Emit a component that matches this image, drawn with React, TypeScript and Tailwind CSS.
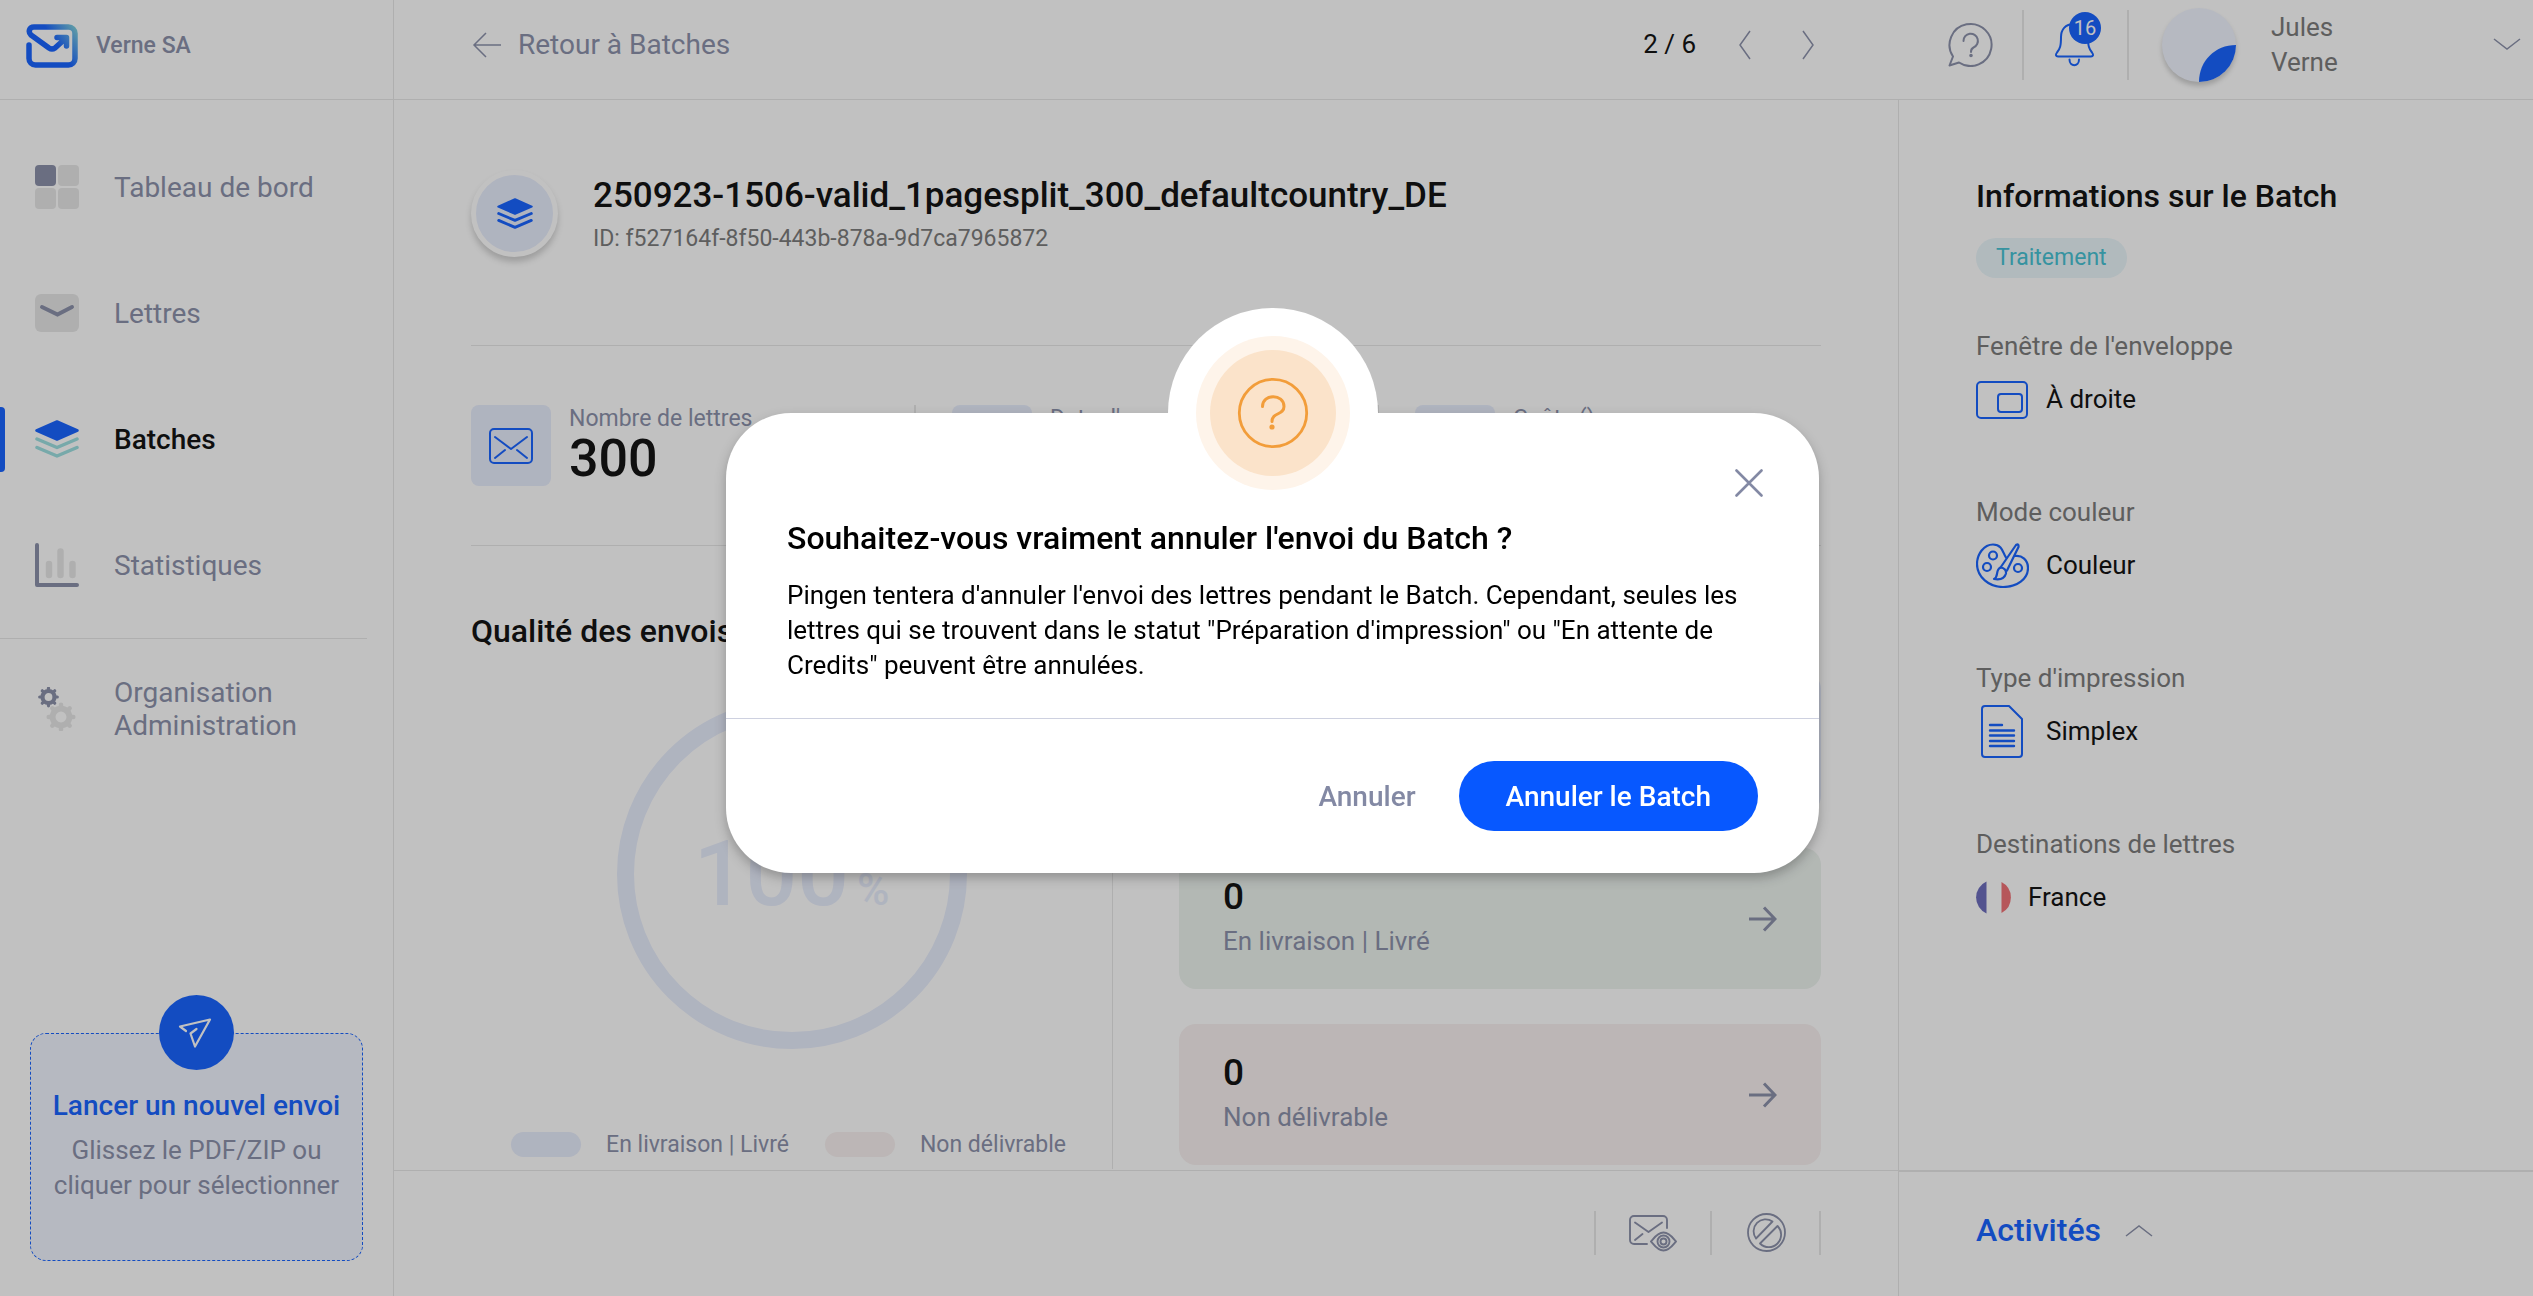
import type { ReactNode } from "react"

type NavItem = { label: string; icon: ReactNode; active?: boolean }
type InfoItem = { label: string; value: string; icon: ReactNode; iconWidth: string }

export default function App() {
  return (
    <div className="flex min-h-screen bg-white font-[Roboto,'Noto_Sans',sans-serif] text-[26px] leading-[35px] text-black">
      <Sidebar />
      <div className="flex min-w-0 flex-1 flex-col">
        <TopBar />
        <div className="flex flex-1">
          <BatchDetail />
          <BatchInfo />
        </div>
      </div>
      <CancelDialog />
    </div>
  )
}

const NAV: NavItem[] = [
  { label: "Tableau de bord", icon: <DashboardIcon /> },
  { label: "Lettres", icon: <LetterIcon /> },
  { label: "Batches", icon: <StackIcon tone="#95ddde" />, active: true },
  { label: "Statistiques", icon: <ChartIcon /> },
]

function Sidebar() {
  return (
    <aside className="flex w-[394px] shrink-0 flex-col border-r border-[#e6e6e6]">
      <a href="#" className="flex h-[100px] items-center gap-[18px] border-b border-[#e6e6e6] pb-2 pl-[26px] text-[23px] font-medium text-[#8389a4]">
        <LogoMark />
        Verne SA
      </a>
      <nav>
        <ul className="mt-6">
          {NAV.map((item) => (
            <NavLink key={item.label} {...item} />
          ))}
        </ul>
        <hr className="mr-[26px] mt-[10px] border-[#e6e6e6]" />
        <a href="#" className="mt-[37px] flex items-center gap-[35px] pl-[35px] text-[28px] leading-[33px] text-[#8389a4]">
          <GearsIcon />
          <span>
            Organisation
            <br />
            Administration
          </span>
        </a>
      </nav>
      <button
        type="button"
        className="mx-[30px] mb-[35px] mt-auto flex h-[228px] flex-col items-center rounded-2xl border border-dashed border-[#0758ff] bg-[#f0f4ff]"
      >
        <span className="-mt-[39px] flex size-[75px] shrink-0 items-center justify-center rounded-full bg-[#0758ff]">
          <PlaneIcon />
        </span>
        <span className="mt-[18px] whitespace-nowrap text-[28px] font-medium text-[#0758ff]">Lancer un nouvel envoi</span>
        <span className="mt-2.5 whitespace-nowrap text-[#8389a4]">
          Glissez le PDF/ZIP ou
          <br />
          cliquer pour sélectionner
        </span>
      </button>
    </aside>
  )
}

function NavLink({ label, icon, active }: NavItem) {
  return (
    <li className="flex h-[126px] items-center">
      <span className={active ? "h-[65px] w-[5px] rounded-r bg-[#0758ff]" : "w-[5px]"} />
      <a
        href="#"
        className={`flex items-center gap-[35px] pl-[30px] text-[28px] ${active ? "font-medium" : "text-[#8389a4]"}`}
      >
        {icon}
        {label}
      </a>
    </li>
  )
}

function TopBar() {
  return (
    <header className="flex h-[100px] shrink-0 items-center border-b border-[#e6e6e6] pb-2.5 text-[#8389a4]">
      <div className="flex flex-1 items-center pl-[78px] pr-[83px]">
        <a href="#" className="flex items-center gap-4 text-[28px]">
          <svg width="30" height="26" viewBox="0 0 30 26" fill="none" stroke="currentColor" strokeWidth="1.5">
            <path d="M29 13H2M14 1L2 13l12 12" />
          </svg>
          Retour à Batches
        </a>
        <span className="ml-auto mr-[42px] text-black">2 / 6</span>
        <button type="button" aria-label="Précédent" className="mr-[49px]">
          <svg width="14" height="30" viewBox="0 0 14 30" fill="none" stroke="currentColor" strokeWidth="1.5">
            <path d="M12 1L2 15l10 14" />
          </svg>
        </button>
        <button type="button" aria-label="Suivant">
          <svg width="14" height="30" viewBox="0 0 14 30" fill="none" stroke="currentColor" strokeWidth="1.5">
            <path d="M2 1l10 14L2 29" />
          </svg>
        </button>
      </div>
      <div className="flex w-[635px] items-center pl-[50px] pr-3">
        <button type="button" aria-label="Aide">
          <HelpIcon />
        </button>
        <span className="ml-[29px] h-[70px] w-0.5 bg-[#e6e6e6]" />
        <button type="button" aria-label="Notifications" className="relative ml-[30px] text-[#0758ff]">
          <BellIcon />
          <span className="absolute -top-[10px] left-[15px] flex size-8 items-center justify-center rounded-full bg-[#0758ff] text-[20px] leading-8 text-white">
            16
          </span>
        </button>
        <span className="ml-[31px] h-[70px] w-0.5 bg-[#e6e6e6]" />
        <button type="button" className="ml-[33px] flex flex-1 items-center text-left text-[#727272]">
          <span className="size-[74px] shrink-0 overflow-hidden rounded-full bg-[#f0f4ff] shadow-[0_4px_5px_rgba(0,0,0,0.2)]">
            <svg width="74" height="74" viewBox="0 0 74 74">
              <path d="M37 74C37 53 53 37 74 37V74Z" fill="#0758ff" />
            </svg>
          </span>
          <span className="ml-[35px]">
            Jules
            <br />
            Verne
          </span>
          <svg className="ml-auto text-[#8389a4]" width="28" height="13" viewBox="0 0 28 13" fill="none" stroke="currentColor" strokeWidth="1.5">
            <path d="M1 1l13 10L27 1" />
          </svg>
        </button>
      </div>
    </header>
  )
}

function BatchDetail() {
  return (
    <main className="flex min-w-0 flex-1 flex-col">
      <div className="flex-1 px-[77px]">
        <div className="flex pt-[70px]">
          <span className="flex size-[87px] items-center justify-center rounded-full border-[5px] border-white bg-[#e6ecfd] shadow-[0_5px_6px_rgba(0,0,0,0.2)]">
            <StackIcon tone="#0758ff" small />
          </span>
          <div className="ml-[35px] pt-1.5">
            <h1 className="text-[35px] font-medium leading-10">250923-1506-valid_1pagesplit_300_defaultcountry_DE</h1>
            <p className="mt-[5px] text-[23px] text-[#727272]">ID: f527164f-8f50-443b-878a-9d7ca7965872</p>
          </div>
        </div>
        <section className="mt-[88px] grid grid-cols-[445fr_463fr_442fr] border-y border-[#e6e6e6] py-[59px]">
          <Stat label="Nombre de lettres" value="300" />
          <Stat label="Date d'envoi" value="–" />
          <Stat label="Coûts ()" value="–" />
        </section>
        <div className="grid grid-cols-2 gap-[66px]">
          <Quality />
          <section className="flex flex-col gap-[35px] pt-[126px]">
            <StatusCard count={300} label="Traitement" tone="bg-[#e6ecfd]" />
            <StatusCard count={0} label="En livraison | Livré" tone="bg-[#ebf2ed]" />
            <StatusCard count={0} label="Non délivrable" tone="bg-[#f8f0ef]" />
          </section>
        </div>
      </div>
      <footer className="flex h-[126px] shrink-0 items-center justify-end border-t border-[#e6e6e6] pb-0.5 pr-[77px] text-[#8389a4]">
        <span className="h-11 w-0.5 bg-[#e6e6e6]" />
        <button type="button" aria-label="Aperçu" className="mx-[33px]">
          <MailEyeIcon />
        </button>
        <span className="h-11 w-0.5 bg-[#e6e6e6]" />
        <button type="button" aria-label="Annuler le Batch" className="ml-[35px] mr-[33px]">
          <BanIcon />
        </button>
        <span className="h-11 w-0.5 bg-[#e6e6e6]" />
      </footer>
    </main>
  )
}

function Stat({ label, value }: { label: string; value: string }) {
  return (
    <div className="flex gap-[18px] border-r-2 border-[#e6e6e6] pl-9 first:pl-0 last:border-r-0">
      <span className="flex h-[81px] w-20 items-center justify-center rounded-lg bg-[#e6ecfd]">
        <EnvelopeIcon />
      </span>
      <div>
        <p className="text-[23px] leading-7 text-[#8389a4]">{label}</p>
        <p className="text-[52px] font-medium leading-[52px]">{value}</p>
      </div>
    </div>
  )
}

function Quality() {
  return (
    <section className="border-r border-[#e6e6e6] pt-[65px]">
      <h2 className="text-[32px] font-medium leading-10">Qualité des envois</h2>
      <div className="mx-auto mt-12 flex size-[350px] items-center justify-center rounded-full border-[17px] border-[#e6ecfd] text-[#e6ecfd]">
        <p className="pt-4 text-[91px] font-medium leading-[91px]">
          100
          <span className="ml-2 text-[44px]">%</span>
        </p>
      </div>
      <ul className="mt-[78px] flex justify-center pb-[7px] pr-1.5 text-[23px] text-[#8389a4]">
        <li className="mr-9 flex items-center gap-[25px]">
          <span className="h-[25px] w-[70px] rounded-full bg-[#e6ecfd]" />
          En livraison | Livré
        </li>
        <li className="flex items-center gap-[25px]">
          <span className="h-[25px] w-[70px] rounded-full bg-[#f8f0ef]" />
          Non délivrable
        </li>
      </ul>
    </section>
  )
}

function StatusCard({ count, label, tone }: { count: number; label: string; tone: string }) {
  return (
    <a href="#" className={`flex h-[141px] items-center justify-between rounded-[17px] px-11 ${tone}`}>
      <span className="pb-0.5">
        <span className="block text-[37px] font-medium leading-[47px]">{count}</span>
        <span className="block leading-[43px] text-[#8389a4]">{label}</span>
      </span>
      <svg className="text-[#8389a4]" width="28" height="26" viewBox="0 0 28 26" fill="none" stroke="currentColor" strokeWidth="3">
        <path d="M0 13h26M15 1.500l11 11.500-11 11.500" />
      </svg>
    </a>
  )
}

const INFO: InfoItem[] = [
  { label: "Fenêtre de l'enveloppe", value: "À droite", icon: <WindowIcon />, iconWidth: "w-[70px]" },
  { label: "Mode couleur", value: "Couleur", icon: <PaletteIcon />, iconWidth: "w-[70px]" },
  { label: "Type d'impression", value: "Simplex", icon: <PageIcon />, iconWidth: "w-[70px]" },
  { label: "Destinations de lettres", value: "France", icon: <FranceIcon />, iconWidth: "w-[52px]" },
]

function BatchInfo() {
  return (
    <aside className="flex w-[635px] shrink-0 flex-col border-l border-[#e6e6e6]">
      <div className="flex-1 pl-[77px] pt-[76px]">
        <h2 className="text-[32px] font-medium leading-10">Informations sur le Batch</h2>
        <span className="mt-[22px] inline-block rounded-full bg-[#e8f5fa] px-5 text-[23px] leading-10 text-[#38bdd0]">Traitement</span>
        <dl className="mt-[51px]">
          {INFO.map((info) => (
            <div key={info.label} className="h-[166px]">
              <dt className="text-[#727272]">{info.label}</dt>
              <dd className="flex h-[71px] items-center">
                <span className={info.iconWidth}>{info.icon}</span>
                {info.value}
              </dd>
            </div>
          ))}
        </dl>
      </div>
      <button type="button" className="flex h-[126px] shrink-0 items-center gap-6 border-t-2 border-[#e6e6e6] pb-2 pl-[77px] text-[32px] font-medium text-[#0758ff]">
        Activités
        <svg className="text-[#8389a4]" width="28" height="13" viewBox="0 0 28 13" fill="none" stroke="currentColor" strokeWidth="1.5">
          <path d="M1 12L14 2l13 10" />
        </svg>
      </button>
    </aside>
  )
}

function CancelDialog() {
  return (
    <div className="fixed inset-0 flex items-center justify-center bg-[#323232]/30 pb-[10px] pl-3">
      <div
        role="dialog"
        aria-modal="true"
        aria-labelledby="cancel-title"
        className="relative w-[1093px] rounded-[65px] bg-white shadow-[0_5px_12px_rgba(0,0,0,0.25)]"
      >
        <div className="absolute -top-[105px] left-1/2 flex size-[210px] -translate-x-1/2 items-center justify-center rounded-full bg-white">
          <QuestionIcon />
        </div>
        <button type="button" aria-label="Fermer" className="absolute right-14 top-14 text-[#8389a4]">
          <svg width="28" height="28" viewBox="0 0 28 28" fill="none" stroke="currentColor" strokeWidth="2.6" strokeLinecap="round">
            <path d="M1.500 1.500l25 25M26.500 1.500l-25 25" />
          </svg>
        </button>
        <div className="border-b border-[#ced1e0] px-[61px] pb-[35px] pt-[105px]">
          <h2 id="cancel-title" className="text-[32px] font-medium leading-10">
            Souhaitez-vous vraiment annuler l'envoi du Batch ?
          </h2>
          <p className="mt-5">
            Pingen tentera d'annuler l'envoi des lettres pendant le Batch. Cependant, seules les lettres qui se trouvent dans le
            statut "Préparation d'impression" ou "En attente de Credits" peuvent être annulées.
          </p>
        </div>
        <div className="flex items-center justify-end gap-[43px] px-[61px] py-[42px] text-[28px] font-medium">
          <button type="button" className="text-[#8389a4]">Annuler</button>
          <button type="button" className="h-[70px] rounded-full bg-[#0758ff] px-[47px] text-white">Annuler le Batch</button>
        </div>
      </div>
    </div>
  )
}

function LogoMark() {
  return (
    <svg width="52" height="44" viewBox="0 0 52 44" fill="none" strokeLinecap="round" strokeLinejoin="round">
      <defs>
        <linearGradient id="logo" x1="10" y1="30" x2="52" y2="2" gradientUnits="userSpaceOnUse">
          <stop offset="0.45" stopColor="#0758ff" />
          <stop offset="1" stopColor="#7fd6d6" />
        </linearGradient>
      </defs>
      <path
        d="M3 21v13.500a6.500 6.500 0 0 0 6.500 6.500h33a6.500 6.500 0 0 0 6.500-6.500v-25A6.500 6.500 0 0 0 42.500 3H8C3 3 2 8 5 11l18 13q3 2 6 0L40 14M31 13.500h9.500V22"
        stroke="url(#logo)"
        strokeWidth="5.500"
      />
    </svg>
  )
}

function DashboardIcon() {
  return (
    <svg width="44" height="44" viewBox="0 0 44 44" fill="#e6e6e6">
      <rect width="21" height="21" rx="4" fill="#8389a4" />
      <rect x="23" width="21" height="21" rx="4" />
      <rect y="23" width="21" height="21" rx="4" />
      <rect x="23" y="23" width="21" height="21" rx="4" />
    </svg>
  )
}

function LetterIcon() {
  return (
    <svg width="44" height="38" viewBox="0 0 44 38" fill="none">
      <rect width="44" height="38" rx="6" fill="#e6e6e6" />
      <path d="M7 13l15.500 7.500L37 13" stroke="#8389a4" strokeWidth="4" strokeLinecap="round" />
    </svg>
  )
}

function StackIcon({ tone, small = false }: { tone: string; small?: boolean }) {
  return (
    <svg width={small ? 36 : 44} height={small ? 31 : 38} viewBox="0 0 44 38" fill="none" strokeLinecap="round" strokeLinejoin="round">
      <path d="M22 1.500L42.500 10.500 22 19.500 1.500 10.500Z" fill="#0758ff" stroke="#0758ff" strokeWidth="2.500" />
      <path d="M2 19l20 8.500L42 19M2 27.500L22 36l20-8.500" stroke={tone} strokeWidth="3.500" />
    </svg>
  )
}

function ChartIcon() {
  return (
    <svg width="44" height="44" viewBox="0 0 44 44" fill="none" strokeLinecap="round" strokeLinejoin="round">
      <path d="M2 2v40h40" stroke="#8389a4" strokeWidth="4" />
      <path d="M14 21v11M25.500 8.500V32M37.500 21v11" stroke="#e6e6e6" strokeWidth="6.500" />
    </svg>
  )
}

function Gear({ cx, cy, r, color }: { cx: number; cy: number; r: number; color: string }) {
  return (
    <g stroke={color} fill="none">
      <circle cx={cx} cy={cy} r={r * 0.6} strokeWidth={r * 0.42} />
      {[0, 45, 90, 135, 180, 225, 270, 315].map((a) => (
        <path
          key={a}
          d={`M${cx} ${cy - r * 0.75}V${cy - r * 0.88}`}
          transform={`rotate(${a} ${cx} ${cy})`}
          strokeWidth={r * 0.32}
          strokeLinecap="round"
        />
      ))}
    </g>
  )
}

function GearsIcon() {
  return (
    <svg width="44" height="44" viewBox="0 0 44 44">
      <Gear cx={13.5} cy={10} r={10} color="#8389a4" />
      <Gear cx={26} cy={30} r={14} color="#e6e6e6" />
    </svg>
  )
}

function PlaneIcon() {
  return (
    <svg className="-ml-1" width="34" height="30" viewBox="0 0 34 30" fill="none" stroke="#fff" strokeWidth="2.200" strokeLinecap="round" strokeLinejoin="round">
      <path d="M8 13L2 8.500 32 1.500 17 28.500 12.500 15.500 18.500 11" />
    </svg>
  )
}

function HelpIcon() {
  return (
    <svg width="45" height="45" viewBox="0 0 45 45" fill="none" stroke="currentColor" strokeWidth="2" strokeLinecap="round" strokeLinejoin="round">
      <path d="M1.500 43.500L5 34.500A21 21 0 1 1 11 40.500Z" />
      <path d="M15.500 19a7.200 7.200 0 1 1 10 6.500c-2 1-2.500 2-2.500 4.500" />
      <circle cx="23" cy="33.500" r="0.800" fill="currentColor" />
    </svg>
  )
}

function BellIcon() {
  return (
    <svg width="42" height="45" viewBox="0 0 42 45" fill="none" stroke="currentColor" strokeWidth="2" strokeLinecap="round" strokeLinejoin="round">
      <path d="M20 2C11 2 7 8 7 15c0 9-1 12-4 15.500-2 2.500-1 4 1 4h33c2 0 3-1.500 1-4C35 27 34 24 34 15 34 8 29 2 20 2Z" />
      <path d="M15.500 37.500c0 7.500 9.500 7.500 9.500 0" />
    </svg>
  )
}

function EnvelopeIcon() {
  return (
    <svg width="44" height="36" viewBox="0 0 44 36" fill="none" stroke="#0758ff" strokeWidth="2" strokeLinecap="round" strokeLinejoin="round">
      <rect x="1" y="1" width="42" height="34" rx="4" />
      <path d="M6 9l16 12L38 9M6 30l10-8M38 30l-10-8" />
    </svg>
  )
}

function MailEyeIcon() {
  return (
    <svg width="48" height="38" viewBox="0 0 48 38" fill="none" stroke="currentColor" strokeWidth="1.900" strokeLinecap="round" strokeLinejoin="round">
      <path d="M18 30H5a4 4 0 0 1-4-4V6a4 4 0 0 1 4-4h29a4 4 0 0 1 4 4v8" />
      <path d="M6 8.500l13.500 9.500L33 8.500M6 26l7.500-6" />
      <path d="M22 27.500c2-2 6-9 12.500-9s10.500 7 12.500 9c-2 2-6 9-12.500 9s-10.500-7-12.500-9Z" />
      <circle cx="34.500" cy="27.500" r="6" />
      <circle cx="34.500" cy="27.500" r="3" />
    </svg>
  )
}

function BanIcon() {
  return (
    <svg width="39" height="39" viewBox="0 0 39 39" fill="none" stroke="currentColor" strokeWidth="1.800" strokeLinejoin="round">
      <circle cx="19.500" cy="19.500" r="18.500" />
      <path d="M9 25.500A12 12 0 0 1 25.500 8.500ZM30.500 13A12 12 0 0 1 13 30.500Z" />
    </svg>
  )
}

function WindowIcon() {
  return (
    <svg width="52" height="38" viewBox="0 0 52 38" fill="none" stroke="#0758ff" strokeWidth="2">
      <rect x="1" y="1" width="50" height="36" rx="4" />
      <rect x="22" y="13" width="24" height="18" rx="3" />
    </svg>
  )
}

function PaletteIcon() {
  return (
    <svg width="53" height="45" viewBox="0 0 53 45" fill="none" stroke="#0758ff" strokeWidth="2.200" strokeLinecap="round" strokeLinejoin="round">
      <path d="M30 14.500C27 11 27 1.500 17 1.500 8 1.500 1 11 1 21c0 13 12 23 26 23s25-8 25-19c0-8-6-13-13-12" />
      <path d="M24.500 24.500L40 2q3-2 2.500 2L31 27.500" />
      <path d="M18 36c5-2 1-9 6.500-11.500 4 .5 6 3 5.500 6-1.500 5-6.500 6.500-12 5.500Z" />
      <circle cx="17" cy="12.500" r="4" />
      <circle cx="11" cy="24" r="4" />
      <circle cx="42" cy="25" r="4" />
    </svg>
  )
}

function PageIcon() {
  return (
    <svg className="ml-[5px]" width="42" height="53" viewBox="0 0 42 53" fill="none" stroke="#0758ff" strokeWidth="2" strokeLinecap="round" strokeLinejoin="round">
      <path d="M4 1h24l13 13v35a3 3 0 0 1-3 3H4a3 3 0 0 1-3-3V4a3 3 0 0 1 3-3Z" />
      <path d="M9 20h12M9 25.500h24M9 30.500h24M9 36h24M9 41h24" strokeWidth="2.400" />
    </svg>
  )
}

function FranceIcon() {
  return (
    <svg width="35" height="35" viewBox="0 0 35 35">
      <path d="M10.500 1.500a17.500 17.500 0 0 0 0 32Z" fill="#6262b8" />
      <path d="M25.500 2a17.500 17.500 0 0 1 0 31Z" fill="#ef666c" />
    </svg>
  )
}

function QuestionIcon() {
  return (
    <svg width="154" height="154" viewBox="0 0 154 154" fill="none" stroke="#f29d3a" strokeLinecap="round">
      <circle cx="77" cy="77" r="77" fill="#fef4ea" stroke="none" />
      <circle cx="77" cy="77" r="63" fill="#fbe3ca" stroke="none" />
      <circle cx="77" cy="77" r="33.700" strokeWidth="2.800" />
      <path d="M66.500 70.500c0-13 21.500-13 21.500 0 0 9-12 5.500-12 15" strokeWidth="3" />
      <circle cx="76" cy="91" r="2.600" fill="#f29d3a" stroke="none" />
    </svg>
  )
}
